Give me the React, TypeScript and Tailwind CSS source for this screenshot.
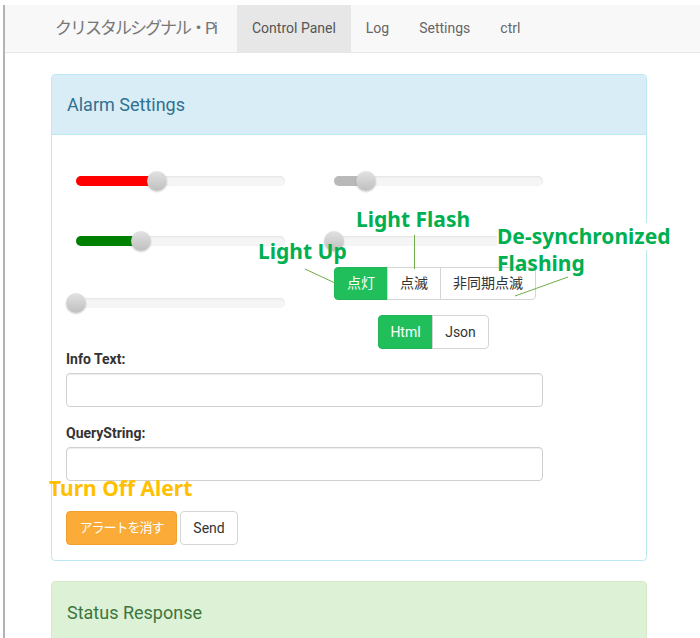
import React from 'react';

const UI_FONT = { fontFamily: '"Roboto", "Noto Sans CJK JP", sans-serif' };
const NOTE_FONT = { fontFamily: '"Noto Sans", "Noto Sans CJK JP", sans-serif' };

type SliderProps = {
    value: number;
    fillClass?: string;
    className?: string;
};

// track is 209px wide, value is the thumb centre in px from the track start
const Slider: React.FC<SliderProps> = ({ value, fillClass, className }) => (
    <div className={`relative h-5 w-[209px] ${className ?? ''}`}>
        <div className="absolute inset-x-0 top-[5px] h-[10px] rounded-[5px] bg-[#f5f5f5] shadow-[inset_0_1px_2px_rgba(0,0,0,0.08)]" />
        {fillClass && (
            <div
                className={`absolute left-0 top-[5px] h-[10px] rounded-l-[5px] ${fillClass}`}
                style={{ width: value }}
            />
        )}
        <div
            className="absolute top-0 -ml-[10px] h-5 w-5 rounded-full bg-gradient-to-b from-[#e2e2e2] to-[#bfbfbf] shadow-[0_1px_2px_rgba(0,0,0,0.2)]"
            style={{ left: value }}
        />
    </div>
);

const NAV_ITEMS = ['Control Panel', 'Log', 'Settings', 'ctrl'];
const MODES = ['点灯', '点滅', '非同期点滅'];

export default function App() {
    return (
        <div className="relative h-[638px] overflow-hidden bg-white pl-[3px] text-[#333]" style={UI_FONT}>
            <div className="h-full border-l-2 border-[#b3b3b3]">
                {/* navbar */}
                <div className="mt-[5px] flex h-[48px] border-b border-[#e7e7e7] bg-[#f8f8f8]">
                    <div className="flex w-[232px] items-center pl-[50px] text-[17px] tracking-[-2px] text-[#777]">
                        クリスタルシグナル・Pi
                    </div>
                    {NAV_ITEMS.map((item, i) => (
                        <div
                            key={item}
                            className={`flex items-center px-[15px] text-[14px] ${
                                i === 0 ? 'bg-[#e7e7e7] text-[#555]' : 'text-[#666]'
                            }`}
                        >
                            {item}
                        </div>
                    ))}
                </div>

                <div className="ml-[46px] w-[596px]">
                    {/* Alarm Settings panel */}
                    <div className="mt-[21px] rounded-[4px] border border-[#bce8f1]">
                        <div className="flex h-[60px] items-center rounded-t-[3px] border-b border-[#bce8f1] bg-[#d9edf7] px-[15px] text-[18px] text-[#31708f]">
                            Alarm Settings
                        </div>
                        <div className="px-[14px] pb-[15px] pt-[36px]">
                            <div className="flex">
                                <div className="ml-[10px] flex flex-col">
                                    <Slider value={81} fillClass="bg-[#ff0000]" />
                                    <Slider value={65} fillClass="bg-[#008000]" className="mt-[40px]" />
                                    <Slider value={0} className="mt-[42px]" />
                                </div>
                                <div className="ml-[49px] flex flex-col">
                                    <Slider value={32} fillClass="bg-[#b9b9b9]" />
                                    <Slider value={0} className="mt-[40px]" />
                                    <div className="mt-[16px] flex">
                                        {MODES.map((m, i) => (
                                            <div
                                                key={m}
                                                className={`flex h-[33px] items-center border px-[12px] text-[14px] ${
                                                    i === 0
                                                        ? 'rounded-l-[4px] border-[#1eb656] bg-[#21bf5b] text-white'
                                                        : 'border-[#d5d5d5] bg-white text-[#333]'
                                                } ${i > 0 ? '-ml-px' : ''} ${i === MODES.length - 1 ? 'rounded-r-[4px]' : ''}`}
                                            >
                                                {m}
                                            </div>
                                        ))}
                                    </div>
                                </div>
                            </div>

                            <div className="ml-[312px] mt-[2px] flex">
                                <div className="flex h-[34px] w-[55px] items-center justify-center rounded-l-[4px] border border-[#1eb656] bg-[#21bf5b] text-[14px] text-white">
                                    Html
                                </div>
                                <div className="-ml-px flex h-[34px] w-[57px] items-center justify-center rounded-r-[4px] border border-[#d5d5d5] bg-white text-[14px] text-[#333]">
                                    Json
                                </div>
                            </div>

                            <div className="mb-[4px] text-[14px] font-bold leading-[20px]">Info Text:</div>
                            <div className="h-[34px] w-[477px] rounded-[4px] border border-[#d0d0d0] shadow-[inset_0_1px_1px_rgba(0,0,0,0.075)]" />

                            <div className="mb-[4px] mt-[16px] text-[14px] font-bold leading-[20px]">QueryString:</div>
                            <div className="h-[34px] w-[477px] rounded-[4px] border border-[#d0d0d0] shadow-[inset_0_1px_1px_rgba(0,0,0,0.075)]" />

                            <div className="mt-[30px] flex gap-[3px]">
                                <div className="flex h-[34px] w-[111px] items-center justify-center rounded-[4px] border border-[#f0a030] bg-[#fbab38] text-[13px] tracking-[-1px] text-white">
                                    アラートを消す
                                </div>
                                <div className="flex h-[34px] w-[58px] items-center justify-center rounded-[4px] border border-[#d5d5d5] bg-white text-[14px] text-[#333]">
                                    Send
                                </div>
                            </div>
                        </div>
                    </div>

                    {/* Status Response panel */}
                    <div className="mt-[20px] rounded-t-[4px] border border-[#d6e9c6]">
                        <div className="flex h-[60px] items-center bg-[#dcf1d6] px-[15px] text-[18px] text-[#3c763d]">
                            Status Response
                        </div>
                        <div className="h-[80px]" />
                    </div>
                </div>
            </div>

            {/* annotations */}
            <svg className="pointer-events-none absolute left-0 top-0" width="700" height="638">
                <line x1="305" y1="269" x2="335" y2="283" stroke="#70ad47" strokeWidth="1" />
                <line x1="414.5" y1="235" x2="414.5" y2="269" stroke="#70ad47" strokeWidth="1" />
                <line x1="515" y1="296" x2="568" y2="277" stroke="#70ad47" strokeWidth="1" />
            </svg>
            <div
                className="absolute left-[258px] top-[238px] text-[21px] font-bold leading-[27px] text-[#00b050]"
                style={NOTE_FONT}
            >
                Light Up
            </div>
            <div
                className="absolute left-[356px] top-[206px] text-[21px] font-bold leading-[27px] text-[#00b050]"
                style={NOTE_FONT}
            >
                Light Flash
            </div>
            <div
                className="absolute left-[497px] top-[223px] text-[21px] font-bold leading-[27px] text-[#00b050]"
                style={NOTE_FONT}
            >
                <div className="bg-white">De-synchronized</div>
                <div>Flashing</div>
            </div>
            <div
                className="absolute left-[49px] top-[475px] text-[21px] font-bold leading-[27px] text-[#ffc000]"
                style={NOTE_FONT}
            >
                Turn Off Alert
            </div>
        </div>
    );
}
